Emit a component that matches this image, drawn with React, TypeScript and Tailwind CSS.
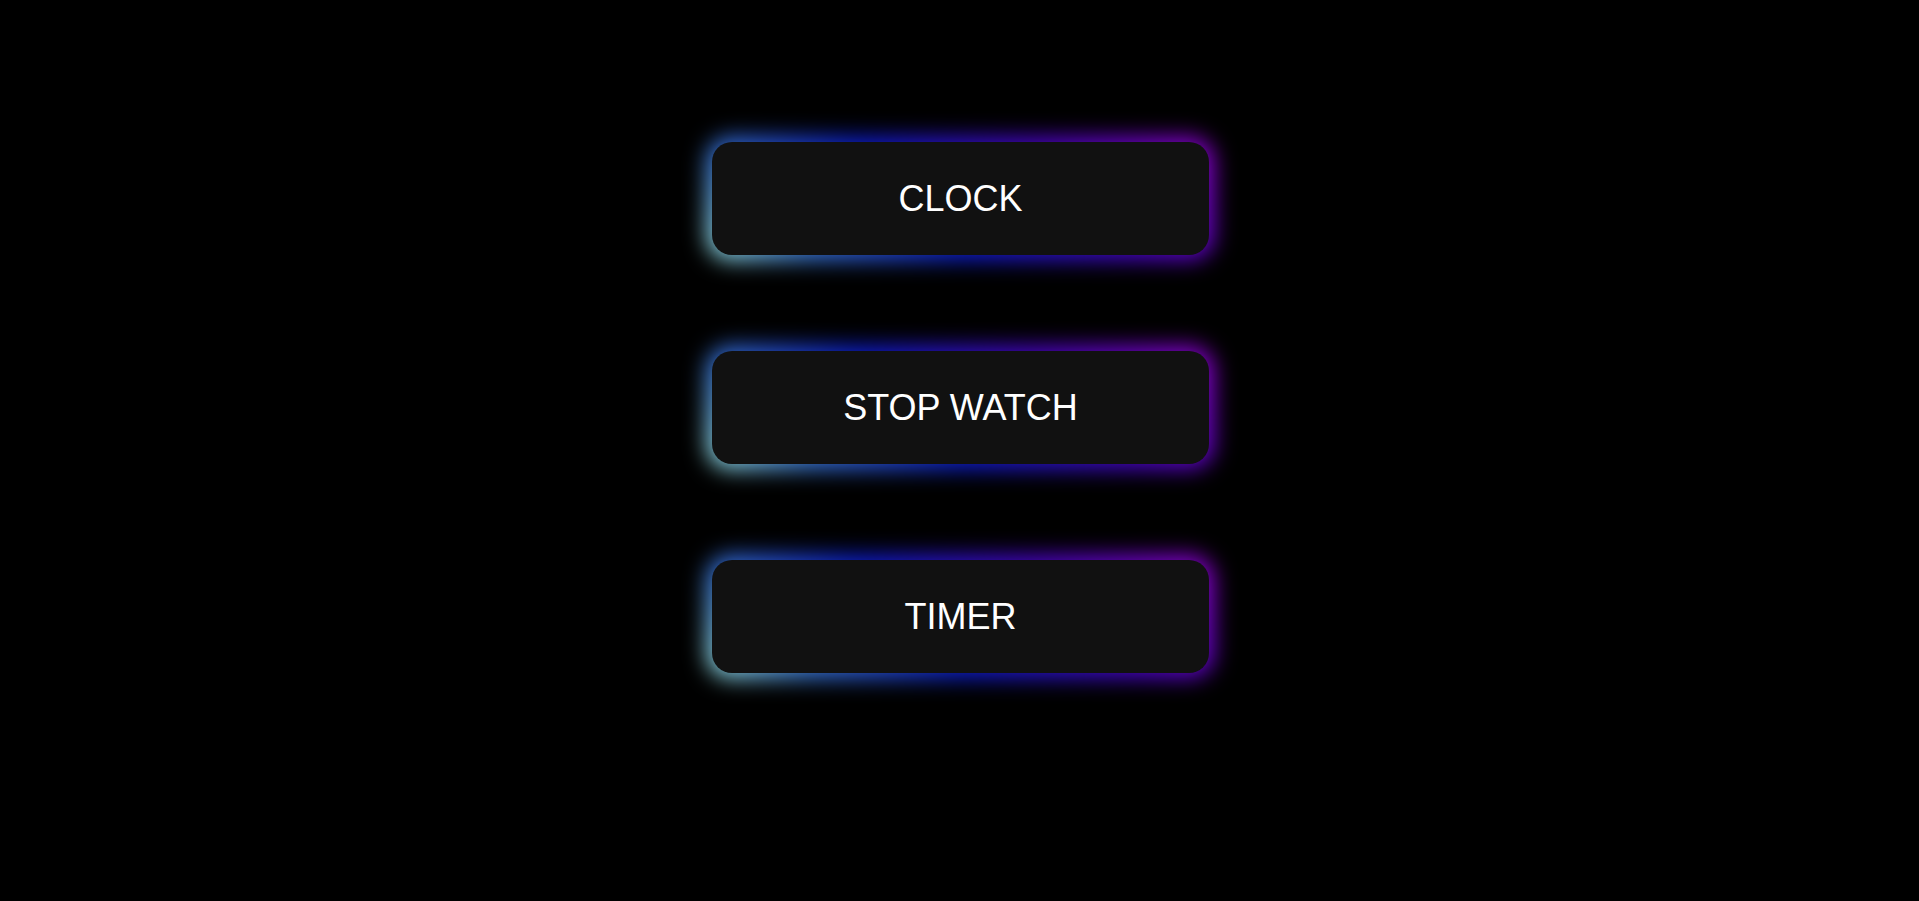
import React from 'react';

const items = ['CLOCK', 'STOP WATCH', 'TIMER'];

function GlowButton({ label }: { label: string }) {
  return (
    <div className="relative w-[497px] h-[113px] translate-x-[1px]">
      {/* gradient glow behind the button */}
      <div className="absolute -inset-[5px] rounded-[24px] bg-[linear-gradient(45deg,#a6f4ea_0%,#3a78d8_18%,#0c1ed0_42%,#4a04c8_70%,#9200d0_100%)] blur-[11px]" />
      <button className="relative w-full h-full rounded-[20px] bg-[#111111] text-white text-[36px] font-['Liberation_Sans',Arial,sans-serif] leading-none">
        {label}
      </button>
    </div>
  );
}

export default function App() {
  return (
    <div className="min-h-screen w-full bg-black flex flex-col items-center pt-[142px] gap-[96px]">
      {items.map((label) => (
        <GlowButton key={label} label={label} />
      ))}
    </div>
  );
}
